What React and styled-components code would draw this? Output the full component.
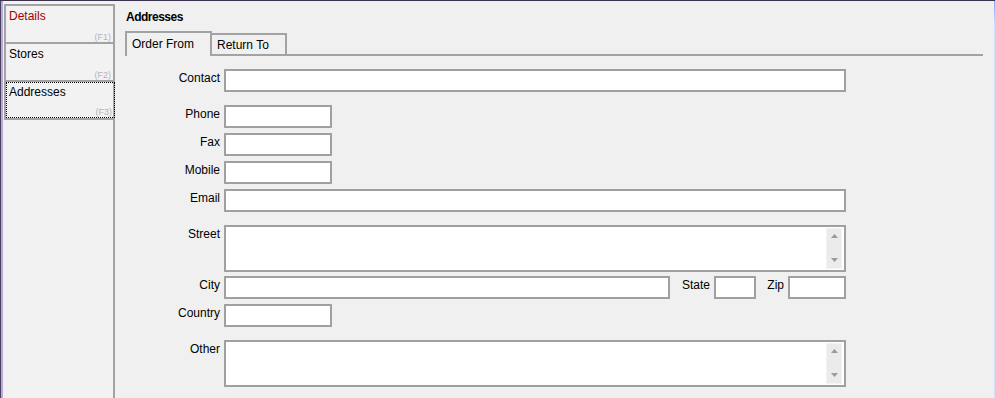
import styled, { createGlobalStyle } from "styled-components";

const GlobalStyle = createGlobalStyle`
  html, body {
    margin: 0;
    padding: 0;
    background: #f0f0f0;
  }
  * {
    box-sizing: border-box;
  }
`;

const navItems = [
  { label: "Details", hint: "(F1)", accent: true },
  { label: "Stores", hint: "(F2)" },
  { label: "Addresses", hint: "(F3)", selected: true },
];

const Frame = styled.div`
  display: flex;
  width: 995px;
  height: 398px;
  overflow: hidden;
  border-top: 1px solid #3d3150;
  border-left: 1px solid #4a3f5e;
  background: linear-gradient(#8aa2f3, #d3dcfa 24px) right top / 1px 100%
      no-repeat,
    #f0f0f0;
  font-family: "Liberation Sans", Arial, sans-serif;
  font-size: 12px;
  color: #000;
`;

const Sidebar = styled.nav`
  display: flex;
  flex-direction: column;
  width: 114px;
  padding: 3px 0 0 1px;
  border-left: 2px solid #b6aad6;
  background: #f2f2f2;
`;

const NavItem = styled.div`
  display: flex;
  flex-direction: column;
  height: 40px;
  margin-top: ${(p) => (p.$first ? "0" : "-2px")};
  border: 2px solid #a3a3a3;
  padding: ${(p) => (p.$selected ? "0" : "3px 0 0 3px")};
`;

const FocusBox = styled.div`
  display: flex;
  flex-direction: column;
  flex: 1;
  margin-right: -2px;
  border: 1px dotted #000;
  padding: 2px 0 0 2px;
`;

const NavLabel = styled.div`
  line-height: 14px;
  color: ${(p) => (p.$accent ? "#a10000" : "#000")};
`;

const NavHint = styled.div`
  margin-top: auto;
  align-self: flex-end;
  padding-right: 2px;
  font-size: 9px;
  line-height: 10px;
  color: #b2b2bc;
`;

const SideFiller = styled.div`
  flex: 1;
  margin-top: -2px;
  border-top: 2px solid #a3a3a3;
  border-right: 2px solid #a3a3a3;
`;

const Main = styled.main`
  flex: 1;
  display: flex;
  flex-direction: column;
  padding: 8px 12px 0 10px;
`;

const Title = styled.h1`
  margin: 0 0 0 1px;
  font-size: 12px;
  font-weight: bold;
  line-height: 16px;
  letter-spacing: -0.5px;
`;

const TabStrip = styled.div`
  display: flex;
  align-items: flex-end;
  height: 25px;
  margin-top: 6px;
  border-bottom: 2px solid #a3a3a3;
`;

const Tab = styled.div`
  width: ${(p) => p.$width}px;
  height: ${(p) => (p.$active ? "25px" : "21px")};
  margin-bottom: ${(p) => (p.$active ? "-2px" : "0")};
  padding: ${(p) => (p.$active ? "3px 0 0 5px" : "2px 0 0 5px")};
  border-top: 2px solid #a3a3a3;
  border-left: ${(p) => (p.$active ? "2px solid #a3a3a3" : "none")};
  border-right: 2px solid #a3a3a3;
  background: #f0f0f0;
  line-height: 16px;
`;

const Form = styled.div`
  display: flex;
  flex-direction: column;
  margin-top: 13px;
`;

const Row = styled.div`
  display: flex;
  align-items: flex-start;
  margin-top: ${(p) => p.$gap || 0}px;
`;

const Label = styled.label`
  width: ${(p) => p.$width || 95}px;
  margin-left: ${(p) => p.$offset || 0}px;
  margin-right: 4px;
  padding-top: 1px;
  text-align: right;
  line-height: 16px;
  white-space: nowrap;
`;

const TextInput = styled.input`
  width: ${(p) => p.$width}px;
  height: 23px;
  margin: 0;
  padding: 0 3px;
  border: 2px solid #a0a0a0;
  background: #fff;
  font: inherit;
  outline: none;
`;

const MemoBox = styled.div`
  display: flex;
  justify-content: flex-end;
  width: 622px;
  height: 47px;
  padding: 1px 2px 1px 0;
  border: 2px solid #a0a0a0;
  background: #fff;
`;

const ScrollBar = styled.div`
  display: flex;
  flex-direction: column;
  justify-content: space-between;
  align-items: center;
  width: 16px;
  padding: 5px 0 6px;
  background: #ebebeb;
  border: 1px solid #f3f3f3;
`;

const Arrow = ({ down }) => (
  <svg width="7" height="4" viewBox="0 0 7 4">
    <path
      d={down ? "M0 0H7L3.5 4Z" : "M0 4H7L3.5 0Z"}
      fill="#9a9a9a"
    />
  </svg>
);

const Memo = () => (
  <MemoBox>
    <ScrollBar>
      <Arrow />
      <Arrow down />
    </ScrollBar>
  </MemoBox>
);

const App = () => {
  return (
    <>
      <GlobalStyle />
      <Frame>
        <Sidebar>
          {navItems.map((item, i) => (
            <NavItem key={item.label} $first={i === 0} $selected={item.selected}>
              {item.selected ? (
                <FocusBox>
                  <NavLabel>{item.label}</NavLabel>
                  <NavHint>{item.hint}</NavHint>
                </FocusBox>
              ) : (
                <>
                  <NavLabel $accent={item.accent}>{item.label}</NavLabel>
                  <NavHint>{item.hint}</NavHint>
                </>
              )}
            </NavItem>
          ))}
          <SideFiller />
        </Sidebar>

        <Main>
          <Title>Addresses</Title>
          <TabStrip>
            <Tab $active $width={87}>
              Order From
            </Tab>
            <Tab $width={75}>Return To</Tab>
          </TabStrip>

          <Form>
            <Row>
              <Label>Contact</Label>
              <TextInput readOnly $width={622} />
            </Row>
            <Row $gap={13}>
              <Label>Phone</Label>
              <TextInput readOnly $width={108} />
            </Row>
            <Row $gap={5}>
              <Label>Fax</Label>
              <TextInput readOnly $width={108} />
            </Row>
            <Row $gap={5}>
              <Label>Mobile</Label>
              <TextInput readOnly $width={108} />
            </Row>
            <Row $gap={5}>
              <Label>Email</Label>
              <TextInput readOnly $width={622} />
            </Row>
            <Row $gap={13}>
              <Label>Street</Label>
              <Memo />
            </Row>
            <Row $gap={4}>
              <Label>City</Label>
              <TextInput readOnly $width={446} />
              <Label $width={29} $offset={11}>
                State
              </Label>
              <TextInput readOnly $width={42} />
              <Label $width={18} $offset={10}>
                Zip
              </Label>
              <TextInput readOnly $width={58} />
            </Row>
            <Row $gap={5}>
              <Label>Country</Label>
              <TextInput readOnly $width={108} />
            </Row>
            <Row $gap={13}>
              <Label>Other</Label>
              <Memo />
            </Row>
          </Form>
        </Main>
      </Frame>
    </>
  );
};

export default App;
